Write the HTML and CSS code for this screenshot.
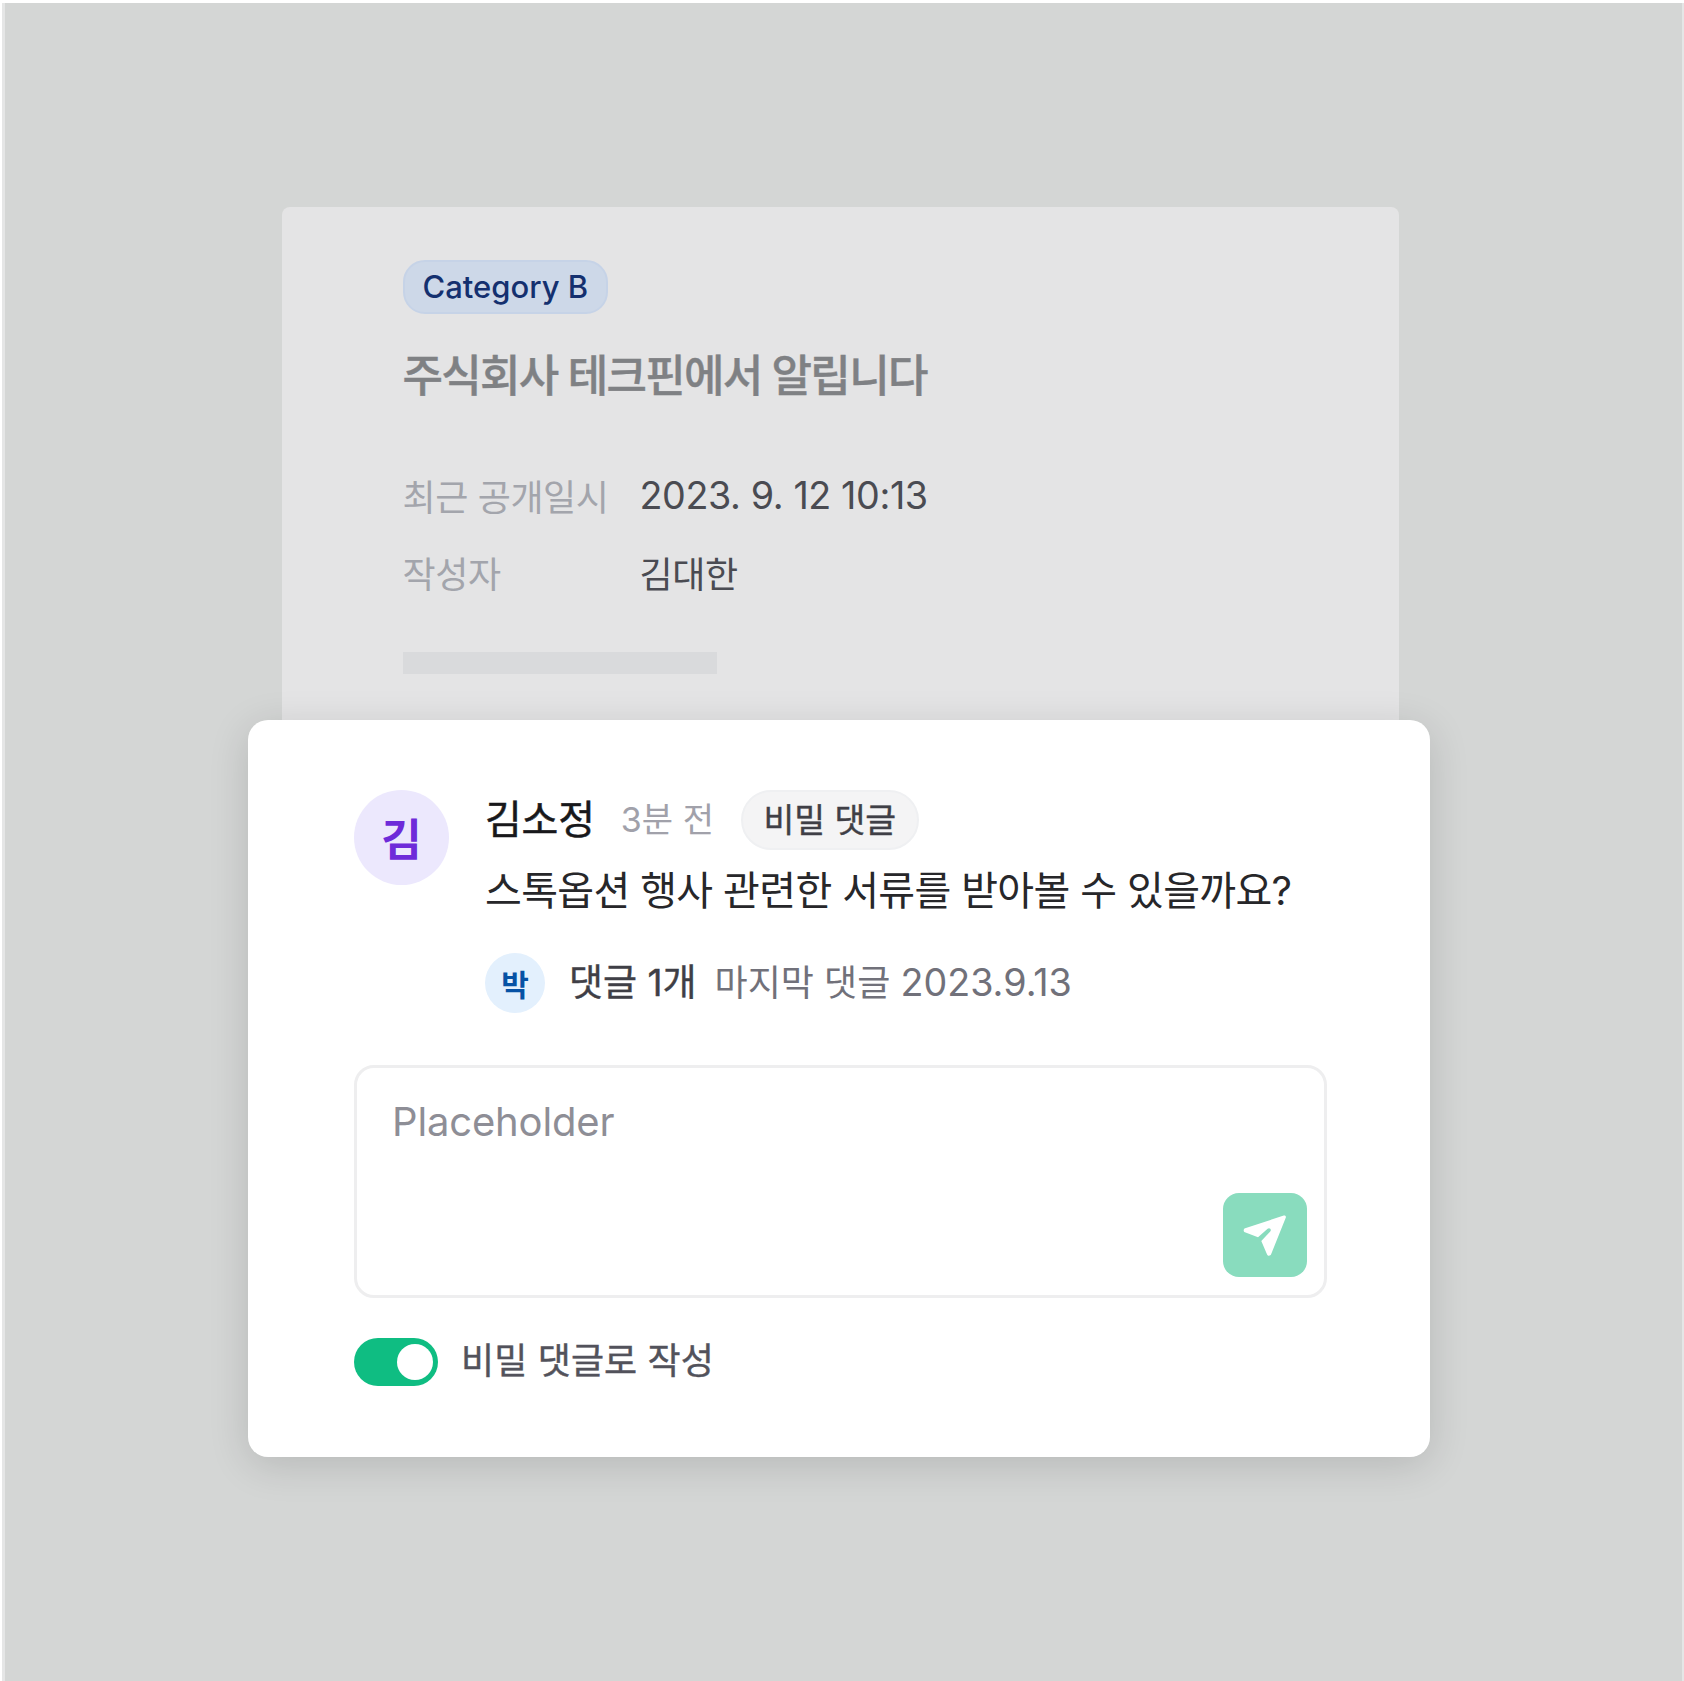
FILE: index.html
```html
<!DOCTYPE html>
<html lang="ko">
<head>
  <meta charset="UTF-8">
  <meta name="viewport" content="width=device-width, initial-scale=1.0">
  <title>비밀 댓글</title>
  <link rel="stylesheet" href="styles.css">
</head>
<body>
  <div class="scene">
    <section class="notice">
      <span class="category">Category B</span>
      <h1 class="notice-title">주식회사 테크핀에서 알립니다</h1>
      <dl class="meta">
        <div class="meta-row">
          <dt>최근 공개일시</dt>
          <dd class="meta-date">2023. 9. 12 10:13</dd>
        </div>
        <div class="meta-row">
          <dt>작성자</dt>
          <dd>김대한</dd>
        </div>
      </dl>
      <div class="skeleton"></div>
    </section>

    <section class="comment-card">
      <div class="comment">
        <div class="avatar">김</div>
        <div class="comment-body">
          <div class="comment-head">
            <span class="comment-author">김소정</span>
            <span class="comment-time">3분 전</span>
            <span class="secret-badge">비밀 댓글</span>
          </div>
          <p class="comment-text">스톡옵션 행사 관련한 서류를 받아볼 수 있을까요?</p>
          <div class="replies">
            <div class="avatar-small">박</div>
            <span class="reply-count">댓글 1개</span>
            <span class="reply-last">마지막 댓글 <span class="reply-date">2023.9.13</span></span>
          </div>
        </div>
      </div>

      <div class="editor">
        <div class="placeholder">Placeholder</div>
        <button class="send" type="button" aria-label="보내기">
          <svg width="48" height="48" viewBox="0 1.5 44 44">
            <path d="M39.2 5.600c1.300-.4 2.300.7 1.900 1.900L27.600 41.200c-.7 1.700-3 1.800-3.700.2l-5.300-12.500 8.200-8.600c1.600-1.700-.6-4-2.400-2.500l-8.800 7.700L3.600 21c-1.600-.7-1.500-3 .2-3.600z" fill="#fff"/>
          </svg>
        </button>
      </div>

      <div class="secret-option">
        <span class="toggle"><span class="toggle-knob"></span></span>
        <span class="secret-label">비밀 댓글로 작성</span>
      </div>
    </section>
  </div>
</body>
</html>
```

FILE: styles.css
```css
* {
  box-sizing: border-box;
}
body {
  margin: 0;
  background-color: #fff;
  font-family: Inter, "Noto Sans CJK KR", sans-serif;
}
.scene {
  height: 1678px;
  margin: 3px 0 0 2px;
  padding-top: 204px;
  padding-left: 243px;
  border-left: 3px solid #e5e6e6;
  border-right: 2px solid #e5e6e6;
  background-color: #d4d6d5;
  overflow: hidden;
}
.notice {
  width: 1117px;
  height: 513px;
  margin-left: 34px;
  padding: 53px 0 0 120.500px;
  background-color: #e4e4e5;
  border-radius: 8px 8px 0 0;
}
.category {
  display: inline-flex;
  align-items: center;
  height: 54px;
  padding: 0 18px 2px;
  border: 2px solid #c6d3e7;
  border-radius: 22px;
  background-color: #cdd8e8;
  color: #14306f;
  font-size: 31px;
  font-weight: 500;
}
.notice-title {
  margin: 34px 0 0;
  color: #7f8184;
  font-size: 44px;
  font-weight: 500;
  line-height: 56px;
  letter-spacing: -1.7px;
  -webkit-text-stroke: 0.4px #7f8184;
}
.meta {
  margin: 52px 0 0;
}
.meta-row {
  display: flex;
  height: 77px;
  align-items: center;
  font-size: 36px;
  letter-spacing: -0.4px;
}
.meta dt {
  width: 237px;
  color: #a3a5ac;
}
.meta dd {
  margin: 0;
  color: #4a4b52;
}
.meta .meta-date {
  padding-top: 1px;
  font-size: 37.7px;
}
.skeleton {
  width: 314px;
  height: 22px;
  margin-top: 42px;
  background-color: #d9dadc;
}
.comment-card {
  position: relative;
  width: 1182px;
  height: 737px;
  padding: 70px 103px 0 106px;
  background-color: #fff;
  border-radius: 20px;
  box-shadow: 0 8px 40px rgba(0, 0, 0, 0.14);
}
.comment {
  display: flex;
  gap: 36px;
}
.avatar {
  display: flex;
  flex: none;
  align-items: center;
  justify-content: center;
  width: 95px;
  height: 95px;
  padding-bottom: 2px;
  border-radius: 50%;
  background-color: #ece8fd;
  color: #6e2bd9;
  font-size: 44px;
  font-weight: 600;
}
.comment-body {
  flex: 1;
}
.comment-head {
  display: flex;
  align-items: center;
  height: 60px;
}
.comment-author {
  padding-bottom: 6px;
  color: #18181b;
  font-size: 40px;
  letter-spacing: -0.2px;
  -webkit-text-stroke: 0.5px #18181b;
}
.comment-time {
  margin-left: 26px;
  padding-bottom: 6px;
  color: #a1a1aa;
  font-size: 34px;
}
.secret-badge {
  display: flex;
  align-items: center;
  height: 60px;
  margin-left: 27px;
  padding: 0 20.500px 5px;
  border: 2px solid #eff0f2;
  border-radius: 30px;
  background-color: #f4f4f5;
  color: #3f3f46;
  font-size: 33.5px;
  -webkit-text-stroke: 0.4px #3f3f46;
}
.comment-text {
  margin: 11px 0 0;
  color: #27272a;
  font-size: 40px;
  line-height: 60px;
  letter-spacing: -0.65px;
}
.replies {
  display: flex;
  align-items: center;
  margin-top: 32px;
}
.avatar-small {
  display: flex;
  align-items: center;
  justify-content: center;
  width: 60px;
  height: 60px;
  border-radius: 50%;
  background-color: #e3f0fd;
  color: #0652a5;
  font-size: 30px;
  font-weight: 600;
}
.reply-count {
  margin-left: 24px;
  padding-bottom: 6px;
  color: #3f3f46;
  font-size: 37px;
  -webkit-text-stroke: 0.4px #3f3f46;
}
.reply-last {
  margin-left: 18px;
  padding-bottom: 6px;
  color: #71717a;
  font-size: 36px;
}
.reply-date {
  font-size: 37.7px;
}
.editor {
  position: relative;
  height: 233px;
  margin-top: 52px;
  padding: 30px 35px;
  border: 3px solid #eeeeef;
  border-radius: 20px;
}
.placeholder {
  color: #8e8e96;
  font-size: 40px;
  line-height: 48px;
  letter-spacing: -0.15px;
}
.send {
  position: absolute;
  right: 17px;
  bottom: 18px;
  display: flex;
  align-items: center;
  justify-content: center;
  width: 84px;
  height: 84px;
  padding: 0;
  border: none;
  border-radius: 16px;
  background-color: #89dcbe;
}
.secret-option {
  display: flex;
  align-items: center;
  margin-top: 33.500px;
}
.toggle {
  display: flex;
  align-items: center;
  justify-content: flex-end;
  width: 84px;
  height: 48px;
  padding-right: 5px;
  border-radius: 24px;
  background-color: #0fbd82;
}
.toggle-knob {
  width: 36px;
  height: 36px;
  border-radius: 50%;
  background-color: #fff;
}
.secret-label {
  margin-left: 23px;
  padding-bottom: 8px;
  color: #52525b;
  font-size: 36px;
  letter-spacing: 0.1px;
  -webkit-text-stroke: 0.4px #52525b;
}
```
